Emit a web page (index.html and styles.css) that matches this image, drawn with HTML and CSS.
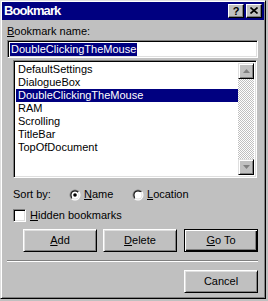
FILE: index.html
```html
<!DOCTYPE html>
<html>
<head>
<meta charset="utf-8">
<link rel="stylesheet" href="styles.css">
</head>
<body>
<div class="window">
  <div class="titlebar">
    <span class="title">Bookmark</span>
    <span class="tbtn help">?</span>
    <span class="tbtn close"><svg width="8" height="7" viewBox="0 0 8 7"><path d="M0.5 0.5 L7.5 6.5 M7.5 0.5 L0.5 6.5" stroke="#000" stroke-width="1.6" fill="none"/></svg></span>
  </div>
  <div class="content">
    <div class="label"><u>B</u>ookmark name:</div>
    <div class="field"><span class="sel">DoubleClickingTheMouse</span></div>
    <div class="listbox">
      <div class="items">
        <div class="item">DefaultSettings</div>
        <div class="item">DialogueBox</div>
        <div class="item selected">DoubleClickingTheMouse</div>
        <div class="item">RAM</div>
        <div class="item">Scrolling</div>
        <div class="item">TitleBar</div>
        <div class="item">TopOfDocument</div>
      </div>
      <div class="scrollbar">
        <div class="sbtn"><svg width="7" height="4" viewBox="0 0 7 4"><path d="M3.5 0 L7 4 L0 4 Z" fill="#808080"/></svg></div>
        <div class="track"></div>
        <div class="sbtn"><svg width="7" height="4" viewBox="0 0 7 4"><path d="M0 0 L7 0 L3.5 4 Z" fill="#808080"/></svg></div>
      </div>
    </div>
    <div class="sortrow">
      <span class="sortlabel">Sort by:</span>
      <span class="radio">
        <svg width="12" height="12" viewBox="0 0 12 12">
          <defs>
            <linearGradient id="go" x1="0" y1="0" x2="1" y2="1"><stop offset="0.5" stop-color="#808080"/><stop offset="0.5" stop-color="#ffffff"/></linearGradient>
            <linearGradient id="gi" x1="0" y1="0" x2="1" y2="1"><stop offset="0.5" stop-color="#000000"/><stop offset="0.5" stop-color="#dfdfdf"/></linearGradient>
          </defs>
          <circle cx="6" cy="6" r="5.5" fill="url(#go)"/>
          <circle cx="6" cy="6" r="4.5" fill="url(#gi)"/>
          <circle cx="6" cy="6" r="3.5" fill="#fff"/>
          <circle cx="6" cy="6" r="1.8" fill="#000"/>
        </svg>
        <span><u>N</u>ame</span>
      </span>
      <span class="radio">
        <svg width="12" height="12" viewBox="0 0 12 12">
          <circle cx="6" cy="6" r="5.5" fill="url(#go)"/>
          <circle cx="6" cy="6" r="4.5" fill="url(#gi)"/>
          <circle cx="6" cy="6" r="3.5" fill="#fff"/>
        </svg>
        <span><u>L</u>ocation</span>
      </span>
    </div>
    <div class="checkrow">
      <span class="checkbox"></span>
      <span><u>H</u>idden bookmarks</span>
    </div>
    <div class="buttons">
      <div class="btn"><u>A</u>dd</div>
      <div class="btn"><u>D</u>elete</div>
      <div class="btn default"><u>G</u>o To</div>
    </div>
    <div class="sep"></div>
    <div class="buttons bottom">
      <div class="btn">Cancel</div>
    </div>
  </div>
</div>
</body>
</html>
```
FILE: styles.css
```css
html, body {
  margin: 0;
  padding: 0;
  background: #c0c0c0;
}
body {
  font-family: "Liberation Sans", Arial, sans-serif;
  font-size: 11px;
  color: #000;
  width: 268px;
  height: 301px;
  overflow: hidden;
}
u { text-decoration: underline; text-underline-offset: 1px; }
.window {
  box-sizing: border-box;
  width: 266px;
  height: 299px;
  border: 1px solid;
  border-color: #dfdfdf #000 #000 #dfdfdf;
  box-shadow: inset 1px 1px #fff, inset -1px -1px #808080;
  padding: 1px;
  background: #c0c0c0;
}
.titlebar {
  height: 18px;
  background: #000080;
  display: flex;
  align-items: center;
  padding: 0 2px 0 2px;
}
.title {
  flex: 1;
  color: #fff;
  font-weight: bold;
  font-size: 13px;
  letter-spacing: -0.9px;
  line-height: 18px;
}
.tbtn {
  box-sizing: border-box;
  width: 16px;
  height: 14px;
  background: #c0c0c0;
  border: 1px solid;
  border-color: #fff #000 #000 #fff;
  box-shadow: inset -1px -1px #808080;
  display: flex;
  align-items: center;
  justify-content: center;
  font-weight: bold;
  font-size: 11px;
  line-height: 12px;
}
.help { margin-right: 2px; padding-bottom: 1px; }
.close svg { display: block; margin-bottom: 1px; }
.content {
  padding: 5px 6px 0 5px;
}
.label {
  line-height: 13px;
  height: 13px;
}
.field {
  box-sizing: border-box;
  margin-top: 2px;
  width: 251px;
  height: 18px;
  background: #fff;
  border: 1px solid;
  border-color: #808080 #fff #fff #808080;
  box-shadow: inset 1px 1px #000, inset -1px -1px #dfdfdf;
  padding: 2px 0 0 2px;
  line-height: 13px;
}
.sel {
  display: inline-block;
  background: #000080;
  color: #fff;
  padding: 0 1px;
  height: 13px;
}
.listbox {
  box-sizing: border-box;
  margin: 2px 0 0 6px;
  width: 244px;
  height: 118px;
  background: #fff;
  border: 1px solid;
  border-color: #808080 #fff #fff #808080;
  box-shadow: inset 1px 1px #000, inset -1px -1px #dfdfdf;
  padding: 2px 2px 2px 2px;
  display: flex;
}
.items {
  flex: 1;
}
.item {
  height: 13px;
  line-height: 13px;
  padding-left: 2px;
  white-space: nowrap;
}
.item.selected {
  background: #000080;
  color: #fff;
}
.scrollbar {
  width: 16px;
  display: flex;
  flex-direction: column;
}
.sbtn {
  box-sizing: border-box;
  height: 16px;
  background: #c0c0c0;
  border: 1px solid;
  border-color: #dfdfdf #000 #000 #dfdfdf;
  box-shadow: inset 1px 1px #fff, inset -1px -1px #808080;
  display: flex;
  align-items: center;
  justify-content: center;
}
.sbtn svg { display: block; }
.track {
  flex: 1;
  background: repeating-conic-gradient(#c0c0c0 0 25%, #fff 0 50%) 0 0 / 2px 2px;
}
.sortrow {
  margin: 10px 0 0 6px;
  height: 13px;
  display: flex;
  align-items: center;
  line-height: 13px;
}
.sortlabel { width: 56px; }
.radio {
  display: flex;
  align-items: center;
  gap: 3px;
  width: 63px;
}
.radio svg { display: block; }
.checkrow {
  margin: 8px 0 0 6px;
  height: 13px;
  display: flex;
  align-items: center;
  gap: 4px;
  line-height: 13px;
}
.checkbox {
  box-sizing: border-box;
  width: 13px;
  height: 13px;
  background: #fff;
  border: 1px solid;
  border-color: #808080 #fff #fff #808080;
  box-shadow: inset 1px 1px #000, inset -1px -1px #dfdfdf;
}
.buttons {
  display: flex;
  gap: 6px;
  margin: 7px 0 0 16px;
}
.buttons .btn.default { margin-left: 1px; }
.buttons.bottom {
  margin: 8px 0 0 177px;
}
.btn {
  box-sizing: border-box;
  width: 74px;
  height: 23px;
  border: 1px solid;
  border-color: #fff #000 #000 #fff;
  box-shadow: inset 1px 1px #dfdfdf, inset -1px -1px #808080;
  display: flex;
  align-items: center;
  justify-content: center;
  line-height: 13px;
}
.btn.default {
  border-color: #000;
  box-shadow: inset 1px 1px #fff, inset -1px -1px #000, inset -2px -2px #808080;
}
.sep {
  margin-top: 8px;
  width: 251px;
  border-top: 1px solid #808080;
  border-bottom: 1px solid #fff;
  height: 0;
}
```
